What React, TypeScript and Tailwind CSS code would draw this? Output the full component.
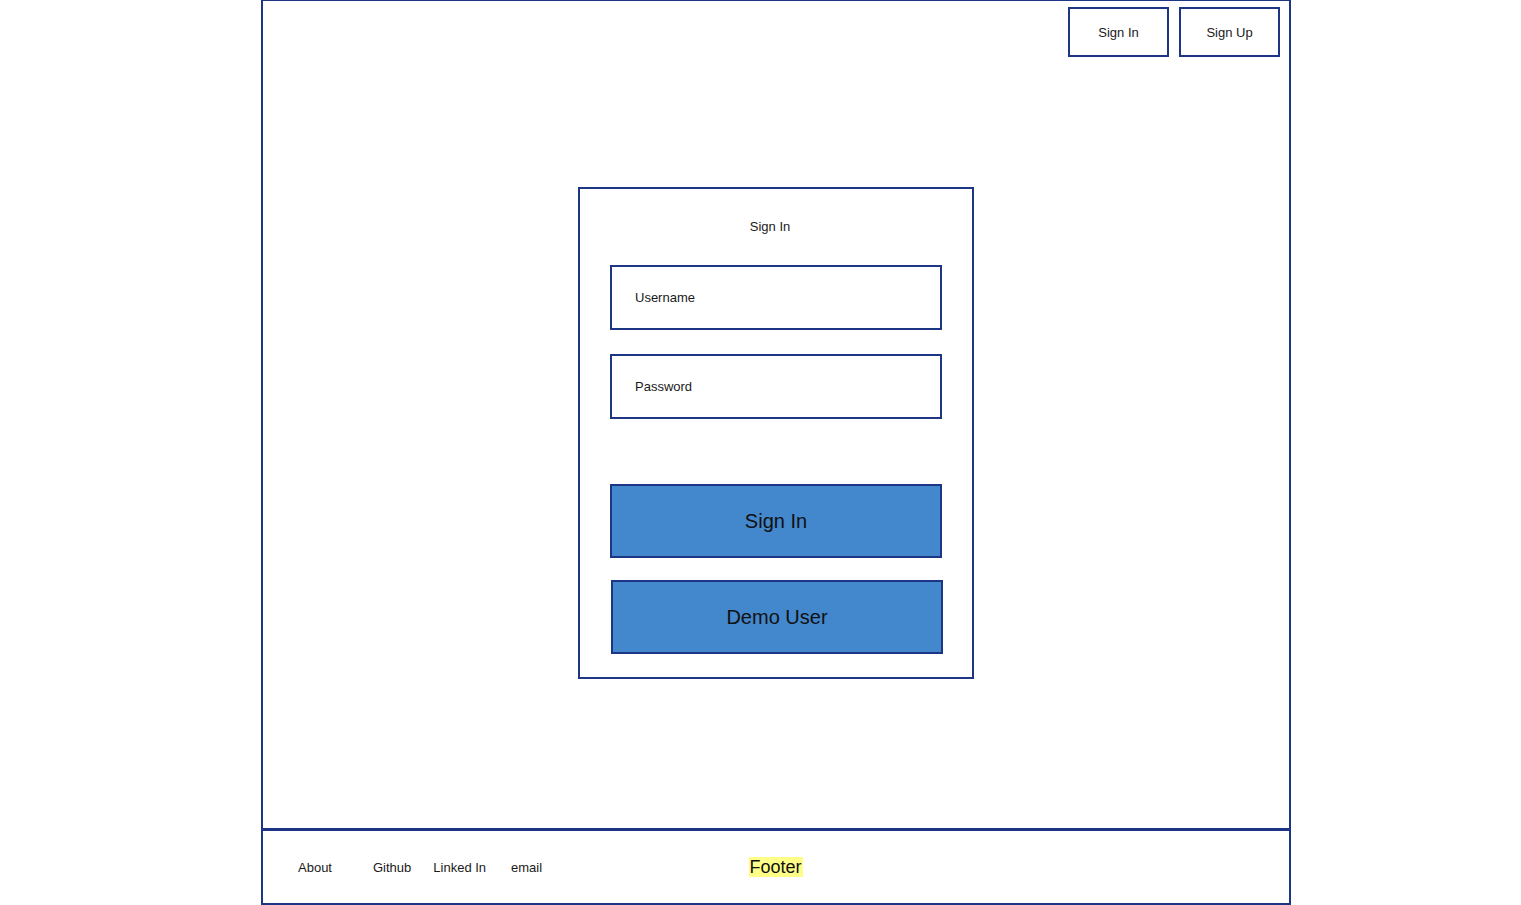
const line = "border-[#1c3584]";

function HeaderButton({ label }: { label: string }) {
  return (
    <button
      className={`flex h-[50px] w-[101px] items-center justify-center border-2 ${line} bg-white pt-[2px] text-[13px] text-[#1a1a1a]`}
    >
      {label}
    </button>
  );
}

function Field({ label }: { label: string }) {
  return (
    <div
      className={`flex h-[65px] w-[332px] items-center border-2 ${line} pl-[23px] text-[13px] text-[#1a1a1a]`}
    >
      {label}
    </div>
  );
}

function BigButton({ label, shift = false }: { label: string; shift?: boolean }) {
  return (
    <button
      className={`flex h-[74px] w-[332px] items-center justify-center border-2 ${line} bg-[#4387cc] text-[20px] text-[#111] ${
        shift ? "ml-[1px]" : ""
      }`}
    >
      {label}
    </button>
  );
}

export default function App() {
  return (
    <div
      className="min-h-[905px] bg-white"
      style={{ fontFamily: '"Liberation Sans", Arial, sans-serif' }}
    >
      <div className={`ml-[261px] w-[1030px] border-x-2 ${line}`}>
        <main className={`flex h-[828px] flex-col border-t ${line}`}>
          <div className="flex justify-end gap-[10px] pr-[9px] pt-[6px]">
            <HeaderButton label="Sign In" />
            <HeaderButton label="Sign Up" />
          </div>

          <div
            className={`mx-auto mt-[130px] flex w-[396px] flex-col border-2 ${line} px-[30px] pb-[23px] pt-[30px]`}
          >
            <h1 className="pr-[12px] text-center text-[13px] leading-[15px] text-[#1a1a1a]">
              Sign In
            </h1>
            <div className="mt-[31px] flex flex-col gap-[24px]">
              <Field label="Username" />
              <Field label="Password" />
            </div>
            <div className="mt-[65px] flex flex-col gap-[22px]">
              <BigButton label="Sign In" />
              <BigButton label="Demo User" shift />
            </div>
          </div>
        </main>

        <footer
          className={`grid h-[77px] grid-cols-[1fr_auto_1fr] items-center border-t-[3px] border-b-2 ${line} pt-[1px]`}
        >
          <nav className="flex items-center pl-[35px] text-[13px] text-[#1a1a1a]">
            <span>About</span>
            <span className="ml-[41px]">Github</span>
            <span className="ml-[22px]">Linked In</span>
            <span className="ml-[25px]">email</span>
          </nav>
          <span className="mb-[2px] bg-[#ffff88] pr-[1px] text-[18px] leading-[20px] text-[#111]">
            Footer
          </span>
          <div />
        </footer>
      </div>
    </div>
  );
}
